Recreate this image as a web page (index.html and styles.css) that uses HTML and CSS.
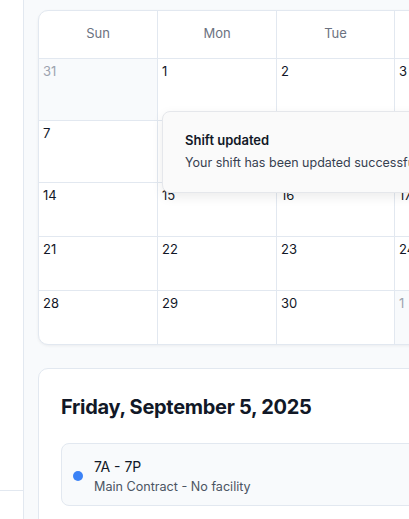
FILE: index.html
```html
<!DOCTYPE html>
<html lang="en">
<head>
<meta charset="utf-8">
<title>Schedule</title>
<link rel="stylesheet" href="styles.css">
</head>
<body>
<aside class="sidebar">
  <div class="sidebar-fill"></div>
  <div class="sidebar-foot"></div>
</aside>
<main class="main">
  <div class="content">
    <section class="calendar">
      <div class="row head">
        <div class="cell">Sun</div><div class="cell">Mon</div><div class="cell">Tue</div><div class="cell">Wed</div><div class="cell">Thu</div><div class="cell">Fri</div><div class="cell">Sat</div>
      </div>
      <div class="row week tall">
        <div class="cell other">31</div><div class="cell">1</div><div class="cell">2</div><div class="cell">3</div><div class="cell">4</div><div class="cell">5</div><div class="cell">6</div>
      </div>
      <div class="row week tall">
        <div class="cell">7</div><div class="cell">8</div><div class="cell">9</div><div class="cell">10</div><div class="cell">11</div><div class="cell">12</div><div class="cell">13</div>
      </div>
      <div class="row week">
        <div class="cell">14</div><div class="cell">15</div><div class="cell">16</div><div class="cell">17</div><div class="cell">18</div><div class="cell">19</div><div class="cell">20</div>
      </div>
      <div class="row week">
        <div class="cell">21</div><div class="cell">22</div><div class="cell">23</div><div class="cell">24</div><div class="cell">25</div><div class="cell">26</div><div class="cell">27</div>
      </div>
      <div class="row week last">
        <div class="cell">28</div><div class="cell">29</div><div class="cell">30</div><div class="cell other">1</div><div class="cell other">2</div><div class="cell other">3</div><div class="cell other">4</div>
      </div>
    </section>
    <section class="day-card">
      <h2 class="day-title">Friday, September 5, 2025</h2>
      <div class="shift">
        <span class="dot"></span>
        <div class="shift-text">
          <div class="shift-time">7A - 7P</div>
          <div class="shift-meta">Main Contract - No facility</div>
        </div>
      </div>
    </section>
  </div>
</main>
<div class="toast">
  <div class="toast-title">Shift updated</div>
  <div class="toast-msg">Your shift has been updated successfully.</div>
</div>
</body>
</html>
```
FILE: styles.css
```css
* { box-sizing: border-box; }
html, body { margin: 0; padding: 0; }
body {
  width: 409px;
  height: 519px;
  overflow: hidden;
  display: flex;
  font-family: Inter, "Noto Sans", sans-serif;
  color: #111827;
  background: #f8fafc;
}
.sidebar {
  width: 24px;
  flex: 0 0 24px;
  background: #fff;
  border-right: 1px solid #e2e8f0;
  display: flex;
  flex-direction: column;
}
.sidebar-fill { flex: 1; }
.sidebar-foot {
  height: 29px;
  border-top: 1px solid #e2e8f0;
}
.main {
  flex: 1;
  min-width: 0;
  padding: 10px 0 0 14px;
  overflow: hidden;
}
.content {
  width: 860px;
  display: flex;
  flex-direction: column;
  gap: 23px;
}
.calendar {
  width: 833px;
  background: #fff;
  border: 1px solid #e2e8f0;
  border-radius: 10px;
  overflow: hidden;
  box-shadow: 0 1px 3px rgba(15, 23, 42, 0.06);
}
.row {
  display: grid;
  grid-template-columns: 119px 119px 118px 119px 118px 119px 119px;
  border-bottom: 1px solid #e2e8f0;
}
.row.last { border-bottom: none; }
.cell {
  border-right: 1px solid #e2e8f0;
}
.head .cell {
  height: 47px;
  padding-bottom: 3px;
  display: flex;
  align-items: center;
  justify-content: center;
  font-size: 13px;
  color: #6b7280;
}
.week .cell {
  height: 53px;
  padding: 4px 4px;
  font-size: 13px;
  line-height: 16px;
  color: #111827;
}
.week.tall .cell { height: 61px; }
.week .cell.other {
  background: #f8fafc;
  color: #9ca3af;
}
.day-card {
  width: 833px;
  background: #fff;
  border: 1px solid #e2e8f0;
  border-radius: 10px;
  padding: 24px 22px 40px;
}
.day-title {
  margin: 0 0 22px;
  font-size: 20px;
  line-height: 28px;
  font-weight: 700;
  color: #111827;
  letter-spacing: -0.3px;
}
.shift {
  display: flex;
  align-items: center;
  gap: 11px;
  height: 63px;
  padding: 0 11px;
  background: #f8fafc;
  border: 1px solid #e2e8f0;
  border-radius: 8px;
}
.dot {
  width: 10px;
  height: 10px;
  border-radius: 50%;
  background: #3b82f6;
  flex: 0 0 10px;
  margin-top: 2px;
}
.shift-text {
  margin-top: 4px;
}
.shift-time {
  font-size: 14px;
  line-height: 20px;
  color: #111827;
}
.shift-meta {
  font-size: 12.6px;
  line-height: 20px;
  color: #4b5563;
}
.toast {
  position: absolute;
  left: 162px;
  top: 111px;
  width: 356px;
  height: 82px;
  padding: 19px 22px;
  background: #fafafa;
  border: 1px solid #e5e7eb;
  border-radius: 8px;
  box-shadow: 0 4px 12px rgba(0, 0, 0, 0.08);
}
.toast-title {
  font-size: 13px;
  font-weight: 600;
  line-height: 18px;
  color: #111827;
}
.toast-msg {
  margin-top: 5px;
  font-size: 12.5px;
  line-height: 18px;
  color: #374151;
  white-space: nowrap;
}
```
